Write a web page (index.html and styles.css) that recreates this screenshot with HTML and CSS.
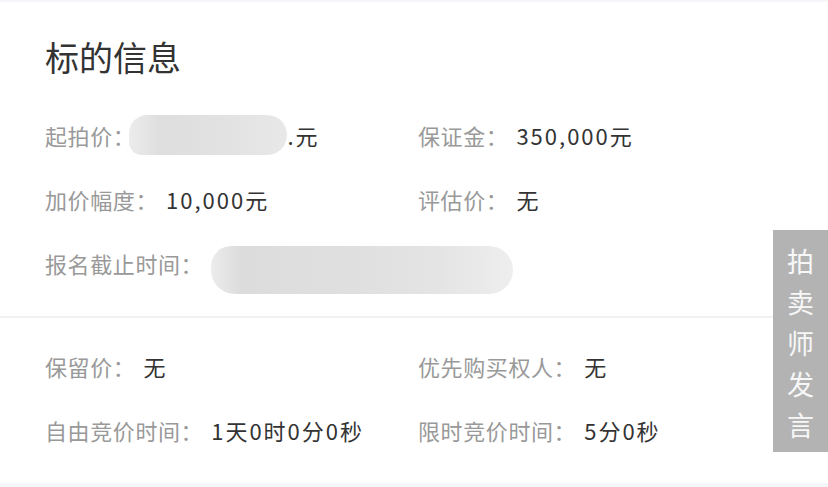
FILE: index.html
```html
<!DOCTYPE html>
<html>
<head>
  <title>标的信息</title>
  <link rel="stylesheet" href="styles.css">
</head>
<body>
  <div class="card">
    <div class="section">
      <h1 class="title">标的信息</h1>
      <div class="grid">
        <div class="item"><span class="label">起拍价：</span><span class="value"><span class="blur blur-price"></span>.元</span></div>
        <div class="item"><span class="label">保证金：</span><span class="value">350,000元</span></div>
        <div class="item"><span class="label">加价幅度：</span><span class="value">10,000元</span></div>
        <div class="item"><span class="label">评估价：</span><span class="value">无</span></div>
        <div class="item wide"><span class="label">报名截止时间：</span><span class="value"><span class="blur blur-date"></span></span></div>
      </div>
    </div>
    <div class="section second">
      <div class="grid">
        <div class="item"><span class="label">保留价：</span><span class="value">无</span></div>
        <div class="item"><span class="label">优先购买权人：</span><span class="value">无</span></div>
        <div class="item"><span class="label">自由竞价时间：</span><span class="value">1天0时0分0秒</span></div>
        <div class="item"><span class="label">限时竞价时间：</span><span class="value">5分0秒</span></div>
      </div>
    </div>
  </div>

  <div class="side-tab">
    <span>拍</span><span>卖</span><span>师</span><span>发</span><span>言</span>
  </div>
</body>
</html>
```

FILE: styles.css
```css
body {
  margin: 0;
  background-color: #f5f5fa;
  font-family: "Noto Sans CJK SC", "Noto Sans", sans-serif;
  color: #333;
}

.card {
  margin-top: 2px;
  background-color: #fff;
}

.section {
  padding: 35px 45px 37px;
}

.section.second {
  border-top: 2px solid #f2f2f2;
  padding-top: 32px;
  padding-bottom: 37px;
}

.title {
  margin: 0 0 42px;
  font-size: 34px;
  line-height: 40px;
  font-weight: normal;
  color: #333;
}

.grid {
  display: grid;
  grid-template-columns: 373px 1fr;
  grid-auto-rows: 32px;
  row-gap: 32px;
}

.item {
  display: flex;
  align-items: center;
  height: 32px;
  font-size: 22px;
  line-height: 32px;
  white-space: nowrap;
}

.item.wide {
  grid-column: 1 / 3;
}

.label {
  color: #999;
  letter-spacing: 0.6px;
}

.value {
  display: flex;
  align-items: center;
  margin-left: 8px;
  color: #333;
  letter-spacing: 2px;
}

.blur {
  display: inline-block;
  background: linear-gradient(90deg, #ececec 0%, #dedede 20%, #e2e2e2 60%, #e8e8e8 100%);
}

.blur-price {
  width: 158px;
  height: 40px;
  margin-left: -14px;
  border-radius: 20px 22px 22px 14px;
}

.blur-date {
  width: 302px;
  height: 48px;
  margin-left: 0;
  margin-top: 14px;
  border-radius: 22px 26px 26px 26px;
  background: linear-gradient(90deg, #ececec 0%, #dcdcdc 10%, #dfdfdf 45%, #e4e4e4 75%, #eeeeee 100%);
}

.side-tab {
  position: absolute;
  top: 230px;
  right: 0;
  width: 55px;
  padding: 10px 0 7px;
  display: flex;
  flex-direction: column;
  align-items: center;
  background-color: #b3b3b3;
  color: #f7f7f7;
  font-size: 27px;
  line-height: 41px;
}
```
